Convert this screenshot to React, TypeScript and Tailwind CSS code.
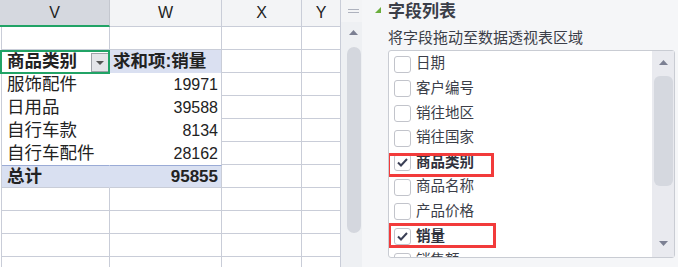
const cjk = '"Liberation Sans", "Noto Sans CJK SC", sans-serif'

const fields = [
  { name: '日期' },
  { name: '客户编号' },
  { name: '销往地区' },
  { name: '销往国家' },
  { name: '商品类别', checked: true, box: 'left-[-2px] top-[2.5px] w-[107px] h-[24px]' },
  { name: '商品名称' },
  { name: '产品价格' },
  { name: '销量', checked: true, box: 'left-[-1px] top-[-1px] w-[108px] h-[25px]' },
  { name: '销售额' },
]

const rows = [
  ['服饰配件', '19971'],
  ['日用品', '39588'],
  ['自行车款', '8134'],
  ['自行车配件', '28162'],
]

function EmptyRow({ h = 'h-[23px]' }: { h?: string }) {
  return (
    <div className={`flex ${h}`}>
      <div className="w-[108px] border-r border-b border-[#c9cdd8]" />
      <div className="w-[112px] border-r border-b border-[#c9cdd8]" />
      <div className="w-[80px] border-r border-b border-[#c9cdd8]" />
      <div className="w-[39px] border-r border-b border-[#c9cdd8]" />
    </div>
  )
}

function Arrow({ up }: { up?: boolean }) {
  return (
    <svg width="9" height="5" viewBox="0 0 9 5">
      <polygon points={up ? '4.5,0 9,5 0,5' : '0,0 9,0 4.5,5'} fill="#7c8093" />
    </svg>
  )
}

function Sheet() {
  return (
    <div className="w-[341px] h-full overflow-hidden bg-white text-[#222]" style={{ fontFamily: cjk }}>
      <div className="flex h-[27px] text-[16px]">
        <div className="w-[110px] bg-[#d5d8df] border-r border-r-[#c4c7cf] border-b-2 border-b-[#21a366] flex items-center justify-center">V</div>
        <div className="w-[112px] bg-[#f3f4f6] border-r border-b border-[#c9cdd8] flex items-center justify-center">W</div>
        <div className="w-[80px] bg-[#f3f4f6] border-r border-b border-[#c9cdd8] flex items-center justify-center">X</div>
        <div className="w-[39px] bg-[#f3f4f6] border-r border-b border-[#c9cdd8] flex items-center justify-center">Y</div>
      </div>
      <div className="ml-[1px] border-l border-l-[#c9cdd8]">
        <EmptyRow />
        <div className="flex h-[23px]">
          <div className="relative w-[108px] border-r border-r-transparent flex items-center pl-[5px] text-[17.5px] font-bold">
            商品类别
            <div className="absolute left-[-2px] top-0 w-[110px] h-[24px] border-2 border-[#21a366] z-10" />
            <div className="absolute right-[0px] top-[3px] w-[18px] h-[19px] border border-[#9fa2a8] bg-[#e4e5e9] flex items-center justify-center">
              <svg width="8" height="4" viewBox="0 0 8 4"><polygon points="0,0 8,0 4,4" fill="#555" /></svg>
            </div>
          </div>
          <div className="w-[112px] bg-[#dae0f1] border-r border-r-[#c9cdd8] flex items-center pl-[3px] text-[17.5px] font-bold">求和项:销量</div>
          <div className="w-[80px] border-r border-b border-[#c9cdd8]" />
          <div className="w-[39px] border-r border-b border-[#c9cdd8]" />
        </div>
        {rows.map(([k, v]) => (
          <div key={k} className="flex h-[23px]">
            <div className="w-[108px] border-r border-r-transparent flex items-center pl-[5px] text-[17.5px]">{k}</div>
            <div className="w-[112px] border-r border-r-[#c9cdd8] flex items-center justify-end pr-[3px] text-[16px]">{v}</div>
            <div className="w-[80px] border-r border-b border-[#c9cdd8]" />
            <div className="w-[39px] border-r border-b border-[#c9cdd8]" />
          </div>
        ))}
        <div className="flex h-[23px]">
          <div className="w-[108px] bg-[#d9e0f1] border-t border-t-[#9aabd6] border-b border-b-[#c9cdd8] border-r border-r-transparent flex items-center pl-[5px] text-[17.5px] font-bold">总计</div>
          <div className="w-[112px] bg-[#d9e0f1] border-t border-t-[#9aabd6] border-b border-b-[#c9cdd8] border-r border-r-[#c9cdd8] flex items-center justify-end pr-[3px] text-[17px] font-bold">95855</div>
          <div className="w-[80px] border-r border-b border-[#c9cdd8]" />
          <div className="w-[39px] border-r border-b border-[#c9cdd8]" />
        </div>
        <EmptyRow />
        <EmptyRow />
        <EmptyRow />
        <EmptyRow />
      </div>
    </div>
  )
}

function SheetScroll() {
  return (
    <div className="w-[21px] h-full flex flex-col bg-[#eef0f3]">
      <div className="h-[22px] bg-[#f3f4f6] flex flex-col items-center justify-center gap-[2px] pl-[3px]">
        <div className="w-[11px] h-px bg-[#aeb2be]" />
        <div className="w-[11px] h-px bg-[#aeb2be]" />
      </div>
      <div className="h-[20px] flex items-center justify-center pl-[4px]">
        <Arrow up />
      </div>
      <div className="ml-[6px] mt-[5px] w-[14px] h-[186px] rounded-full bg-[#d4d7de]" />
    </div>
  )
}

function Panel() {
  return (
    <div className="w-[316px] h-full bg-[#f5f6f8] text-[#3b3e48]" style={{ fontFamily: cjk }}>
      <div className="h-[22px] flex items-center pl-[13px]">
        <svg width="6" height="6" viewBox="0 0 6 6" className="mr-[7px] mt-[-2px]">
          <polygon points="6,0 6,6 0,6" fill="#6aae3c" />
        </svg>
        <span className="text-[17px] font-bold leading-none">字段列表</span>
      </div>
      <div className="mt-[4px] h-[24px] flex items-center pl-[26px] text-[15px]">将字段拖动至数据透视表区域</div>
      <div className="ml-[26px] w-[287px] h-[208px] bg-white border border-[#c9ccd3] rounded-[3px] flex">
        <div className="w-[263px] h-full overflow-hidden pt-[1px]">
          {fields.map((f) => (
            <div key={f.name} className="relative h-[24.6px] flex items-center pl-[5px] gap-[5px]">
              <div className="w-[17px] h-[17px] rounded-[3px] border-[1.5px] border-[#c2c4cb] bg-white flex items-center justify-center">
                {f.checked && (
                  <svg width="11" height="9" viewBox="0 0 11 9">
                    <path d="M1 4.5 L4 7.5 L10 1" fill="none" stroke="#3b4056" strokeWidth="2" />
                  </svg>
                )}
              </div>
              <span className={`text-[14.5px] ${f.checked ? 'font-bold text-[#2f323c]' : ''}`}>{f.name}</span>
              {f.box && <div className={`absolute border-[3px] border-[#f23b3b] ${f.box}`} />}
            </div>
          ))}
        </div>
        <div className="w-[22px] h-full bg-[#e9eaef] flex flex-col items-center">
          <div className="h-[22px] flex items-center justify-center">
            <Arrow up />
          </div>
          <div className="mt-[3px] w-[19px] h-[110px] rounded-[6px] bg-[#d5d8df]" />
          <div className="flex-1" />
          <div className="h-[20px] mb-[4px] flex items-center justify-center">
            <Arrow />
          </div>
        </div>
      </div>
    </div>
  )
}

export default function App() {
  return (
    <div className="w-[678px] h-[267px] overflow-hidden flex bg-white">
      <Sheet />
      <SheetScroll />
      <Panel />
    </div>
  )
}
